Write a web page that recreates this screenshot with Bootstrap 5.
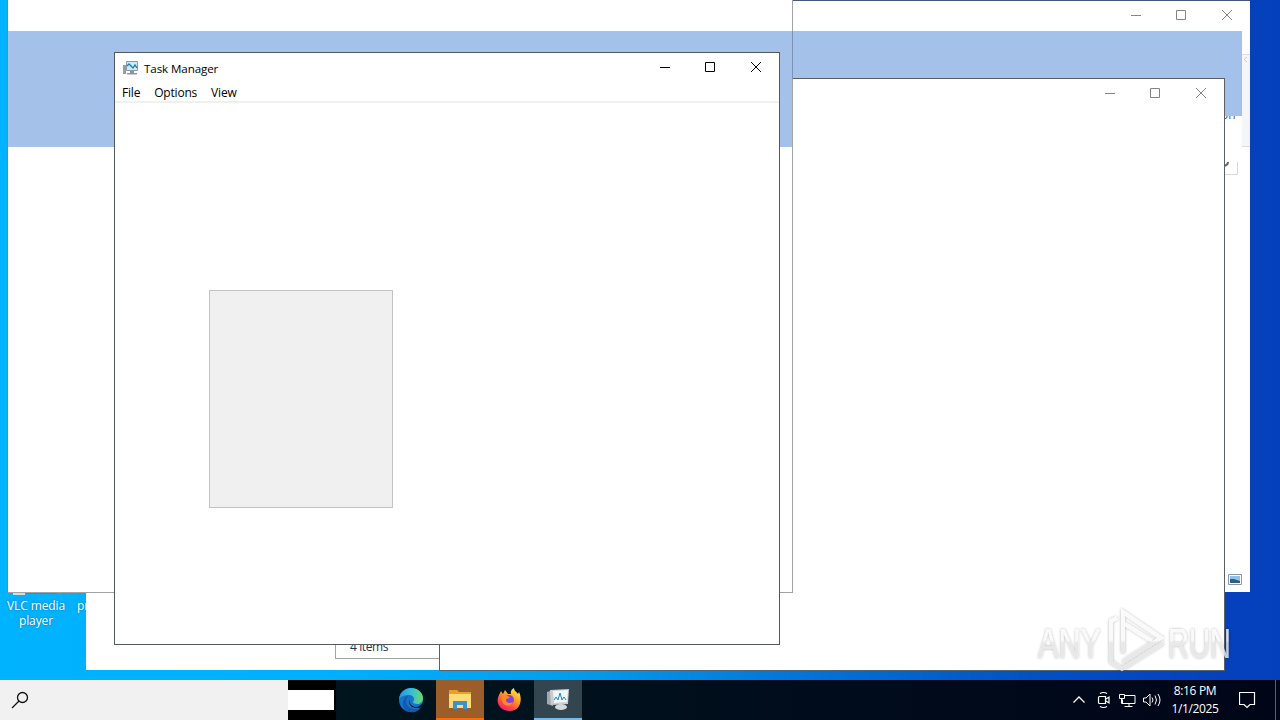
<!DOCTYPE html>
<html lang="en">
<head>
<meta charset="utf-8">
<title>Desktop</title>
<meta name="viewport" content="width=device-width, initial-scale=1">
<link href="https://cdn.jsdelivr.net/npm/bootstrap@5.3.0/dist/css/bootstrap.min.css" rel="stylesheet">
<style>
body{font-family:"Open Sans","Noto Sans",sans-serif;font-size:12px;line-height:15px;color:#000;width:1280px;height:720px}
.desktop{background:linear-gradient(90deg,#00b3ff 0,#00b0fb 320px,#00a0f0 560px,#0078dc 780px,#0050c4 1040px,#0541bd 1224px,#0440bc 1280px)}
.win{position:absolute;background:#fff}
.win-explorer{left:780px;top:0;width:470px;height:592px;border-top:1px solid #44587c}
.win-items{left:86px;top:560px;width:360px;height:110px}
.win-blank{left:439px;top:78px;width:786px;height:593px;border:1px solid #5b6068}
.win-ghost{left:7px;top:-2px;width:786px;height:595px;border:1px solid #a2a2a2;border-left-color:#2b9ad2}
.win-task{left:114px;top:52px;width:666px;height:593px;border:1px solid #53585f}
.band{background:#a4c2e9}
.ghost-edge{left:792px;top:31px;width:1px;height:48px;background:#7c93b4}
.caption-row{height:29px}
.caption-row svg{width:46px;height:29px;fill:none;stroke:currentColor;stroke-width:1}
.caption-title{margin-left:5px;letter-spacing:-.5px;padding-top:2px}
.inactive{color:#858585}
.over{position:absolute}
.menu-row{height:21px;border-bottom:2px solid #f0f0f0;gap:14px;padding:3px 0 0 7px;letter-spacing:-.2px}
.panel-grey{margin:187px 0 0 94px;width:184px;height:218px;background:#f0f0f0;border:1px solid #c3c3c3}
.count-box{left:249px;top:70px;width:110px;height:29px;border:1px solid #a0a4a0;color:#26324f;padding:8px 0 0 14px;letter-spacing:-.4px}
.label-icon{color:#fff;text-align:center;text-shadow:0 0 2px #0a6aa0;letter-spacing:-.1px}
.taskbar{height:40px;background:linear-gradient(90deg,#00161f 0,#00131d 500px,#000c1c 800px,#000618 1280px);color:#fff}
.search-box{width:288px;background:#f1f1f1;padding-left:10px}
.search-end{width:48px;background:#000}
.search-end div{width:46px;height:20px;background:#fff}
.pinned{gap:1px;margin-left:51px}
.tb{width:48px;height:40px}
.tb-files{background:#9b5d29;border-bottom:2px solid #ff6a00}
.tb-task{background:#33454f;border-bottom:2px solid #76b9ed}
.clock{width:60px;line-height:18px;text-align:center;font-size:12px;letter-spacing:-.35px}
.ln{fill:none;stroke:#fff;stroke-width:1}
.show-desk{width:5px;border-left:1px solid #5b606c}
.watermark{left:1030px;top:600px}
.wm-word{font-family:"Liberation Sans",sans-serif;font-size:43px;font-weight:400}
</style>
</head>
<body class="overflow-hidden">
<main class="desktop vh-100 d-flex flex-column position-relative overflow-hidden">
  <div class="flex-grow-1">
    <div class="over label-icon" style="left:0;top:598px;width:72px">VLC media<br>player</div>
    <div class="over label-icon" style="left:77px;top:598px">pr</div>
    <svg class="over" style="left:10px;top:588px" width="50" height="7"><path d="M3 0h12v7H3z" fill="#d8dce0"/><path d="M16 0h31v6H16z" fill="#86766c"/></svg>

    <section class="win win-explorer">
      <div class="caption-row inactive d-flex justify-content-end">
        <svg viewBox="0 0 46 29"><path d="M19 14.5h10"/></svg>
        <svg viewBox="0 0 46 29"><path d="M18.5 9.500h9v9h-9z"/></svg>
        <svg viewBox="0 0 46 29"><path d="M18 9l10 10M28 9l-10 10"/></svg>
      </div>
      <div class="over" style="left:462px;top:53px;width:8px;height:93px;background:#f5f6f7;border:solid #dcdcdc;border-width:1px 0"></div>
      <span class="over" style="left:441px;top:106px;color:#3f5b84">on</span>
      <div class="over band" style="left:0;top:30px;width:462px;height:85px"></div>
      <svg class="over" style="left:462px;top:55px" width="6" height="7"><path d="M5 1L2 3.500L5 6" fill="none" stroke="#ccc"/></svg>
      <div class="over" style="left:430px;top:161px;width:28px;height:13px;border:1px solid #d9d9d9;border-top:0"></div>
      <svg class="over" style="left:443px;top:159px" width="8" height="9"><path d="M5 2Q5 5 1 6" fill="none" stroke="#666" stroke-width="2"/></svg>
      <svg class="over" style="left:448px;top:573px" width="14" height="11"><path d="M.5.5h13v10H.5z" fill="#fff" stroke="#8a98a8"/><path d="M2 2h10v7H2z" fill="#8cc3ee"/><path d="M2 5l4 0 6 2v2H2z" fill="#31607d"/></svg>
    </section>

    <section class="win win-items"><div class="over count-box">4 items</div></section>

    <section class="win win-blank">
      <div class="caption-row inactive d-flex justify-content-end">
        <svg viewBox="0 0 46 29"><path d="M19 14.500h10"/></svg>
        <svg viewBox="0 0 46 29"><path d="M18.500 9.500h9v9h-9z"/></svg>
        <svg viewBox="0 0 46 29"><path d="M18 9l10 10M28 9l-10 10"/></svg>
      </div>
    </section>

    <section class="win win-ghost">
      <div class="band" style="margin-top:32px;height:116px"></div>
    </section>
    <div class="over ghost-edge"></div>

    <section class="win win-task">
      <div class="caption-row d-flex align-items-center">
        <svg style="width:17px;height:16px;margin-left:7px" viewBox="0 0 17 16" stroke="none"><path d="M1 5h3v9H1z" fill="#929da5" stroke="none"/><path d="M4.500 1.500h11v9h-11z" fill="#cdeafa" stroke="#8e99a1"/><path d="M5 6l2-2 4 4 2-3 2 3" stroke="#1b7fb4" stroke-width="1.300"/><path d="M8 11h4v2h3v1.500H5V13h3z" fill="#8b979f" stroke="none"/></svg>
        <span class="caption-title" style="letter-spacing:-.1px;font-size:11.600px">Task Manager</span>
        <div class="d-flex ms-auto">
          <svg viewBox="0 0 46 29"><path d="M19 14.500h10"/></svg>
          <svg viewBox="0 0 46 29"><path d="M18.500 9.500h9v9h-9z"/></svg>
          <svg viewBox="0 0 46 29"><path d="M18 9l10 10M28 9l-10 10"/></svg>
        </div>
      </div>
      <div class="menu-row d-flex"><span>File</span><span>Options</span><span>View</span></div>
      <div class="panel-grey"></div>
    </section>

    <svg class="over watermark" width="220" height="80" viewBox="0 0 220 80">
      <defs>
        <filter id="soft" x="-10%" y="-20%" width="120%" height="140%"><feDropShadow dx="0" dy="0" stdDeviation="1.6" flood-color="#000" flood-opacity=".35"/></filter>
        <linearGradient id="fade" gradientUnits="userSpaceOnUse" x1="0" y1="10" x2="0" y2="70"><stop offset=".5" stop-color="#fafafa"/><stop offset=".55" stop-color="#e4e4e4"/></linearGradient>
      </defs>
      <g filter="url(#soft)" fill="url(#fade)" opacity=".85">
        <text class="wm-word" x="8" y="58" textLength="63" lengthAdjust="spacingAndGlyphs">ANY</text>
        <text class="wm-word" x="138" y="58" textLength="63" lengthAdjust="spacingAndGlyphs">RUN</text>
        <path d="M93 53V12L131 38L93 62M87 18L81 21V62L92 69L133 43M95 24L122 41" fill="none" stroke="url(#fade)" stroke-width="4"/>
      </g>
    </svg>
  </div>

  <footer class="taskbar d-flex position-relative">
    <div class="search-box d-flex align-items-center">
      <svg width="20" height="20" fill="none" stroke="#111" stroke-width="1.300"><circle cx="12.500" cy="7.500" r="5"/><path d="M9 11l-7 7"/></svg>
    </div>
    <div class="search-end d-flex align-items-center"><div></div></div>
    <div class="pinned d-flex">
      <div class="tb d-flex align-items-center justify-content-center">
        <svg width="26" height="26" viewBox="0 0 26 26"><defs><linearGradient id="eg" x1="0" x2="1"><stop stop-color="#2595dc"/><stop offset=".5" stop-color="#35bdd8"/><stop offset="1" stop-color="#69dc65"/></linearGradient></defs><circle cx="13" cy="13" r="12" fill="#1474c9"/><path d="M1 12C2 5 7 1 13 1c7 0 12 5 12 10 0 4-3 6-6 6-2 0-4-1-4-2s1-1 1-3-2-4-5-4c-4 0-8 1-10 4z" fill="url(#eg)"/><path d="M11 8c-4 3-5 14 6 14 3 0 5-1 6-2-3 5-8 6-12 5C2 22 4 10 11 8z" fill="#1558ad"/><path d="M13 10c-3 3-1 10 5 10 2 0 5-2 7-4v3c-1 1-3 2-5 2-8 1-11-6-7-11z" fill="#02151e"/></svg>
      </div>
      <div class="tb tb-files d-flex align-items-center justify-content-center">
        <svg width="24" height="22" viewBox="0 0 24 22"><path d="M1 2h8l2 2h12v16H1z" fill="#e5a22b"/><path d="M1 6h22v14H1z" fill="#fddc76"/><path d="M5 21v-8h14v8h-4v-4H9v4z" fill="#3b91d4"/></svg>
      </div>
      <div class="tb d-flex align-items-center justify-content-center">
        <svg width="26" height="26" viewBox="0 0 26 26"><defs><linearGradient id="fx" x1=".8" y1="0" x2=".2" y2="1"><stop stop-color="#fff24b"/><stop offset=".4" stop-color="#ff9a28"/><stop offset=".8" stop-color="#ff3750"/><stop offset="1" stop-color="#e31587"/></linearGradient></defs><path d="M3 8l2-4 2 3 2-4 3 4h3c-1-3 1-5 3-6 0 3 3 4 4 6l1-2c4 8 1 19-9 19S-1 16 3 8z" fill="url(#fx)"/><circle cx="13" cy="13" r="5" fill="#8542d4"/><path d="M6 9c3-2 5 0 8 1-1 2-4 1-4 3 0 3 4 4 7 2-1 4-7 5-10 1-1-2-2-5-1-7z" fill="#ff8a20"/></svg>
      </div>
      <div class="tb tb-task d-flex align-items-center justify-content-center">
        <svg width="26" height="24" viewBox="0 0 26 24"><path d="M2 5l6-2v16l-6-2z" fill="#a7aaad"/><path d="M5 3l19-1-1 15-17 1z" fill="#c9ced3"/><path d="M8 4l15-1-1 12-13 1z" fill="#edf6fb"/><path d="M9 13l2-3 2 3 2-7 2 7 2-3 2 3" fill="none" stroke="#2383bf"/><ellipse cx="16" cy="20" rx="6" ry="3" fill="#d5d8da"/></svg>
      </div>
    </div>
    <div class="d-flex align-items-center ms-auto">
      <svg class="ln" style="margin-right:2px" width="92" height="24" viewBox="0 0 92 24"><path stroke-width="1.300" d="M2.500 14.500L8 9l5.500 5.500"/><path stroke-width="1.200" d="M28.500 8.500h6v7h-6q-1 0-1-1v-5q0-1 1-1zM35 11l3-2v6l-3-2M29 5.500q3.500-2 7 0M29 18.500q3.500 2 7 0"/><path d="M54 7.500h10v8H51.500v-4M48.500 6.500h5v4h-5zM50.500 10.500v5h2M58 15.500v3M53.500 18.500h8"/><path d="M72.500 10h2.500l4-4v12l-4-4h-2.500zM81 9.500q2 2.500 0 5M84 7.500q3 4.500 0 9M87 6q4 6 0 12"/></svg>
      <div class="clock">8:16 PM<br>1/1/2025</div>
      <svg class="ln" style="margin:0 19px 0 14px" width="17" height="18"><path stroke-width="1.200" d="M.5 1.500h15v12H11l-3 3-3-3H.5z"/></svg>
      <div class="show-desk align-self-stretch"></div>
    </div>
  </footer>
</main>
<script src="https://cdn.jsdelivr.net/npm/bootstrap@5.3.0/dist/js/bootstrap.bundle.min.js"></script>
</body>
</html>
